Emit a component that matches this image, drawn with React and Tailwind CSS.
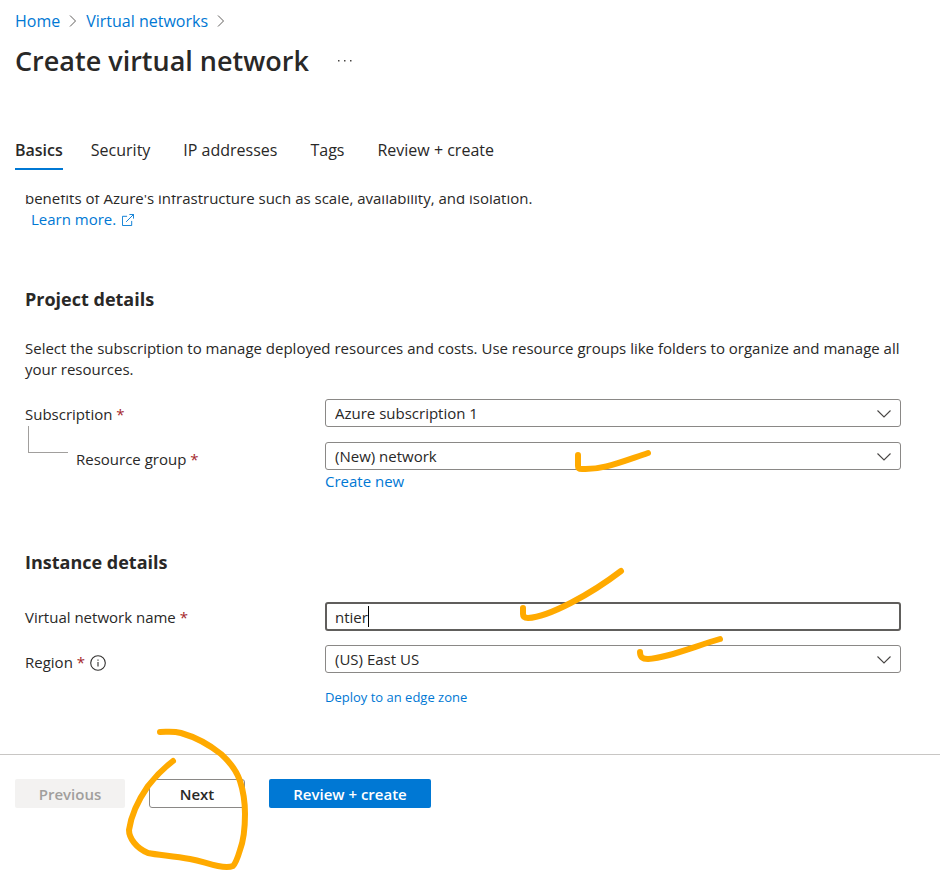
import React from "react";

const crumbs = ["Home", "Virtual networks"];
const tabs = ["Security", "IP addresses", "Tags", "Review + create"];

function Required() {
  return <span className="text-[#a4262c]"> *</span>;
}

function SelectBox({ id, value }) {
  return (
    <div className="relative">
      <select
        id={id}
        defaultValue={value}
        className="block h-7 w-full appearance-none rounded-[3px] border border-[#8a8886] bg-white pl-[9px] pr-9 text-[15px] leading-5 text-[#292827]"
      >
        <option>{value}</option>
      </select>
      <svg
        className="pointer-events-none absolute right-[10px] top-[11px] h-2 w-[14px]"
        viewBox="0 0 14 8"
        fill="none"
        stroke="#484644"
        strokeWidth="1.1"
      >
        <path d="M0.5 0.5 L7 7 L13.5 0.5" />
      </svg>
    </div>
  );
}

function Ink() {
  return (
    <svg
      className="pointer-events-none absolute left-0 top-0 h-[871px] w-[940px]"
      viewBox="0 0 940 871"
      fill="none"
      stroke="#ffaa00"
      strokeWidth="6"
      strokeLinecap="round"
      strokeLinejoin="round"
      aria-hidden="true"
    >
      <path d="M578 455 V466 Q578 469 582 469 C602 470 618 463 648 453" />
      <path d="M523 608 V614 Q523 618 528 618 C549 617 591 594 621 571" />
      <path d="M640 652 C640 658 643 659 648 659 C666 658 690 648 720 639" />
      <path d="M160 732 C168 732 173 731 181 733 C195 737 211 746 221 754 C231 763 237 772 240 781 C244 793 245 806 245 814 C245 829 243 842 240 850 C237 860 235 864 233 866 C228 868 223 867 218 866 C207 864 202 861 190 859 C173 856 158 855 148 853 C136 848 129 838 129 830 C131 816 139 799 148 786 C155 777 164 768 173 761" />
    </svg>
  );
}

export default function App() {
  return (
    <div className="relative min-h-screen overflow-hidden bg-white font-['Open_Sans','Noto_Sans',sans-serif] text-[15px] leading-[21px] text-[#292827]">
      <header className="px-[15px] pt-[10px]">
        <nav className="flex items-center gap-2 text-[16px] leading-[22px]" aria-label="Breadcrumb">
          {crumbs.map((c) => (
            <React.Fragment key={c}>
              <a href="#" className="text-[#0078d4]">{c}</a>
              <svg className="h-3 w-[10px]" viewBox="0 0 10 12" fill="none" stroke="#605e5c">
                <path d="M2 0.5 L7.5 6 L2 11.5" />
              </svg>
            </React.Fragment>
          ))}
        </nav>
        <div className="mt-[9px] flex items-center gap-7">
          <h1 className="text-[27px] font-semibold leading-10">Create virtual network</h1>
          <button type="button" aria-label="More actions" className="flex h-5 w-4 items-center justify-center">
            <svg className="h-1 w-4" viewBox="0 0 16 4" fill="#484644">
              <rect x="1" y="1" width="1.5" height="1.5" />
              <rect x="7" y="1" width="1.5" height="1.5" />
              <rect x="13" y="1" width="1.5" height="1.5" />
            </svg>
          </button>
        </div>
      </header>

      <div role="tablist" className="mt-[57px] flex gap-[33px] px-[15px] text-[16px] leading-6">
        <button type="button" role="tab" aria-selected="true" className="-mr-[5px] border-b-2 border-[#0078d4] pb-[6px] font-semibold">
          Basics
        </button>
        {tabs.map((t) => (
          <button key={t} type="button" role="tab" aria-selected="false" className="pb-2">
            {t}
          </button>
        ))}
      </div>

      <main className="mt-[25px] overflow-hidden pl-[25px] pr-[39px]">
        <p className="-mt-[7px]">
          benefits of Azure's infrastructure such as scale, availability, and isolation.
        </p>
        <a href="#" className="ml-[6px] inline-flex items-center gap-[6px] text-[#0078d4]">
          Learn more.
          <svg className="h-3 w-3" viewBox="0 0 13 13" fill="none" stroke="#0078d4">
            <path d="M5.5 2.5 H0.5 V12.5 H10.5 V7.5 M8 0.5 H12.5 V5 M12.5 0.5 L4.5 8.5" />
          </svg>
        </a>

        <h2 className="mt-[57px] text-[18px] font-bold leading-6">Project details</h2>
        <p className="mt-[27px]">
          Select the subscription to manage deployed resources and costs. Use resource groups like folders to organize and manage all your resources.
        </p>

        <div className="mt-[19px] grid grid-cols-[300px_1fr] gap-y-[15px]">
          <label htmlFor="sub" className="pt-[5px]">Subscription<Required /></label>
          <SelectBox id="sub" value="Azure subscription 1" />
          <div className="flex">
            <span className="-mt-4 ml-[3px] mr-2 h-[27px] w-10 border-b border-l border-[#a19f9d]" />
            <label htmlFor="rg" className="pt-[7px]">Resource group<Required /></label>
          </div>
          <div>
            <SelectBox id="rg" value="(New) network" />
            <a href="#" className="mt-[1px] block w-fit text-[#0078d4]">Create new</a>
          </div>
        </div>

        <h2 className="mt-[58px] text-[18px] font-bold leading-6">Instance details</h2>
        <div className="mt-7 grid grid-cols-[300px_1fr] gap-y-[14px]">
          <label htmlFor="name" className="pt-[5px]">Virtual network name<Required /></label>
          <div className="relative">
            <input
              id="name"
              type="text"
              defaultValue="ntier"
              className="block h-[29px] w-full rounded-[3px] border-2 border-[#605e5c] bg-white px-2 text-[15px] leading-5 outline-none"
            />
            <span className="absolute left-[43px] top-1 h-[21px] w-px bg-black" />
          </div>
          <div className="flex items-start gap-[5px] pt-[7px]">
            <label htmlFor="region">Region<Required /></label>
            <button type="button" aria-label="Region information" className="mt-[3px]">
              <svg className="h-4 w-4" viewBox="0 0 16 16" fill="none" stroke="#323130">
                <circle cx="8" cy="8" r="7.3" strokeWidth="1.1" />
                <path d="M8 7 V11.5 M8 4.6 V5.8" strokeWidth="1.1" />
              </svg>
            </button>
          </div>
          <div>
            <SelectBox id="region" value="(US) East US" />
            <a href="#" className="mt-[14px] block w-fit text-[13px] text-[#0078d4]">Deploy to an edge zone</a>
          </div>
        </div>
      </main>

      <footer className="mt-[46px] flex gap-6 border-t border-[#c8c6c4] px-[15px] pt-6 font-semibold">
        <button type="button" disabled className="h-[29px] w-[110px] rounded-[2px] bg-[#f3f2f1] pt-px text-[#a19f9d]">Previous</button>
        <button type="button" className="h-[29px] w-24 rounded-[3px] border border-[#8a8886] bg-white pt-px">Next</button>
        <button type="button" className="h-[29px] w-[162px] rounded-[2px] bg-[#0078d4] pt-px text-white">Review + create</button>
      </footer>

      <Ink />
    </div>
  );
}
